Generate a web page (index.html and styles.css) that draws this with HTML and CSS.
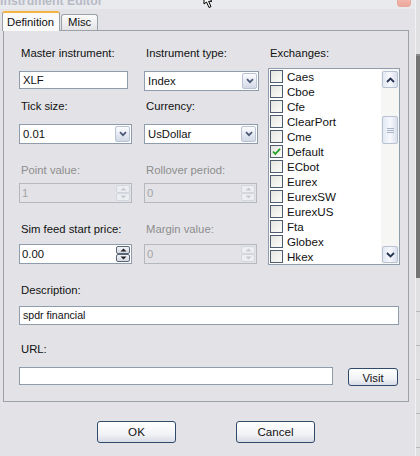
FILE: index.html
```html
<!DOCTYPE html>
<html>
<head>
<meta charset="utf-8">
<link rel="stylesheet" href="styles.css">
</head>
<body>
<div class="screen">
  <div class="dialog">
    <div class="titlebar">
      <span class="title">Instrument Editor</span>
      <span class="close"></span>
    </div>
    <div class="tabs">
      <div class="tab active">Definition</div>
      <div class="tab">Misc</div>
    </div>
    <div class="panel">
      <div class="top">
        <div class="grid">
          <div class="field">
            <div class="lbl g10">Master instrument:</div>
            <div class="input w109"><span>XLF</span></div>
          </div>
          <div class="field">
            <div class="lbl g10">Instrument type:</div>
            <div class="select w115"><span class="val">Index</span><span class="dd"><svg width="8" height="6" viewBox="0 0 8 6"><path d="M1 1.2 L4 4.2 L7 1.2" fill="none" stroke="#4a5a78" stroke-width="1.7"/></svg></span></div>
          </div>
          <div class="field r2">
            <div class="lbl g10">Tick size:</div>
            <div class="select w113"><span class="val">0.01</span><span class="dd"><svg width="8" height="6" viewBox="0 0 8 6"><path d="M1 1.2 L4 4.2 L7 1.2" fill="none" stroke="#4a5a78" stroke-width="1.7"/></svg></span></div>
          </div>
          <div class="field r2">
            <div class="lbl g10">Currency:</div>
            <div class="select w114"><span class="val">UsDollar</span><span class="dd"><svg width="8" height="6" viewBox="0 0 8 6"><path d="M1 1.2 L4 4.2 L7 1.2" fill="none" stroke="#4a5a78" stroke-width="1.7"/></svg></span></div>
          </div>
          <div class="field r3">
            <div class="lbl dis g5">Point value:</div>
            <div class="spin disabled w113"><span class="val">1</span><span class="arrows"><span class="ar"><svg width="7" height="4" viewBox="0 0 7 4"><path d="M0.5 3.5 L3.5 0.5 L6.5 3.5 Z" fill="#c6c9cf"/></svg></span><span class="ar"><svg width="7" height="4" viewBox="0 0 7 4"><path d="M0.5 0.5 L3.5 3.5 L6.5 0.5 Z" fill="#c6c9cf"/></svg></span></span></div>
          </div>
          <div class="field r3">
            <div class="lbl dis g5">Rollover period:</div>
            <div class="spin disabled w113"><span class="val">0</span><span class="arrows"><span class="ar"><svg width="7" height="4" viewBox="0 0 7 4"><path d="M0.5 3.5 L3.5 0.5 L6.5 3.5 Z" fill="#c6c9cf"/></svg></span><span class="ar"><svg width="7" height="4" viewBox="0 0 7 4"><path d="M0.5 0.5 L3.5 3.5 L6.5 0.5 Z" fill="#c6c9cf"/></svg></span></span></div>
          </div>
          <div class="field r4">
            <div class="lbl g7">Sim feed start price:</div>
            <div class="spin w113"><span class="val">0.00</span><span class="arrows on"><span class="ar"><svg width="7" height="4" viewBox="0 0 7 4"><path d="M0.5 3.5 L3.5 0.5 L6.5 3.5 Z" fill="#222"/></svg></span><span class="ar"><svg width="7" height="4" viewBox="0 0 7 4"><path d="M0.5 0.5 L3.5 3.5 L6.5 0.5 Z" fill="#222"/></svg></span></span></div>
          </div>
          <div class="field r4">
            <div class="lbl dis g7">Margin value:</div>
            <div class="spin disabled w113"><span class="val">0</span><span class="arrows"><span class="ar"><svg width="7" height="4" viewBox="0 0 7 4"><path d="M0.5 3.5 L3.5 0.5 L6.5 3.5 Z" fill="#c6c9cf"/></svg></span><span class="ar"><svg width="7" height="4" viewBox="0 0 7 4"><path d="M0.5 0.5 L3.5 3.5 L6.5 0.5 Z" fill="#c6c9cf"/></svg></span></span></div>
          </div>
        </div>
        <div class="exch">
          <div class="lbl exlbl">Exchanges:</div>
          <div class="list">
            <div class="items">
              <div class="item"><span class="cb"></span>Caes</div>
              <div class="item"><span class="cb"></span>Cboe</div>
              <div class="item"><span class="cb"></span>Cfe</div>
              <div class="item"><span class="cb"></span>ClearPort</div>
              <div class="item"><span class="cb"></span>Cme</div>
              <div class="item"><span class="cb"><svg width="11" height="11" viewBox="0 0 11 11"><path d="M2 5.5 L4.3 8 L9 2.8" fill="none" stroke="#22a022" stroke-width="1.8"/></svg></span>Default</div>
              <div class="item"><span class="cb"></span>ECbot</div>
              <div class="item"><span class="cb"></span>Eurex</div>
              <div class="item"><span class="cb"></span>EurexSW</div>
              <div class="item"><span class="cb"></span>EurexUS</div>
              <div class="item"><span class="cb"></span>Fta</div>
              <div class="item"><span class="cb"></span>Globex</div>
              <div class="item"><span class="cb"></span>Hkex</div>
            </div>
            <div class="sbar">
              <span class="sbtn"><svg width="9" height="6" viewBox="0 0 9 6"><path d="M1 5 L4.5 1.5 L8 5" fill="none" stroke="#26344f" stroke-width="1.8"/></svg></span>
              <span class="thumb"><svg width="7" height="7" viewBox="0 0 7 7"><path d="M0 1.5 H7 M0 3.5 H7 M0 5.5 H7" stroke="#a8b2c6" stroke-width="1"/></svg></span>
              <span class="sbtn down"><svg width="9" height="6" viewBox="0 0 9 6"><path d="M1 1 L4.5 4.5 L8 1" fill="none" stroke="#26344f" stroke-width="1.8"/></svg></span>
            </div>
          </div>
        </div>
      </div>
      <div class="lbl desc-lbl">Description:</div>
      <div class="input wdesc"><span class="small">spdr financial</span></div>
      <div class="lbl url-lbl">URL:</div>
      <div class="url-row">
        <div class="input wurl"></div>
        <div class="btn visit">Visit</div>
      </div>
    </div>
    <div class="buttons">
      <div class="btn big">OK</div>
      <div class="btn big">Cancel</div>
    </div>
  </div>
  <div class="behind">
    <div class="bh-top"></div>
    <div class="bh-dark"></div>
    <div class="bh-low"></div>
    <div class="bh-low"></div>
    <div class="bh-low"></div>
    <div class="bh-low"></div>
    <div class="bh-low"></div>
  </div>
  <svg class="cursor" width="14" height="14" viewBox="0 0 14 14"><path d="M1 -6 L1 4 L3.5 2 L6 7.5 L8 6.6 L5.6 1.3 L9 1.3 Z" fill="#fff" stroke="#000" stroke-width="1"/></svg>
</div>
</body>
</html>
```
FILE: styles.css
```css
* { box-sizing: border-box; }
html, body { margin: 0; padding: 0; }
body {
  width: 420px;
  height: 456px;
  overflow: hidden;
  background: #e3e3e7;
  font-family: "Liberation Sans", Arial, sans-serif;
  font-size: 11.3px;
  color: #111;
}
.screen {
  position: relative;
  display: flex;
  width: 420px;
  height: 456px;
}
.dialog {
  width: 416px;
  height: 456px;
  background: #e3e3e7;
  border-right: 1px solid #f2f2f4;
}
.titlebar {
  height: 9px;
  overflow: hidden;
  display: flex;
  justify-content: space-between;
  background: #e9eaee;
}
.title {
  display: block;
  margin-top: -6px;
  margin-left: 0;
  font-weight: bold;
  font-size: 12.3px;
  line-height: 14px;
  color: #b7bbc6;
}
.close {
  display: block;
  width: 14px;
  height: 16px;
  margin-top: -9px;
  margin-right: 4px;
  border: 1px solid #e7a89e;
  border-radius: 3px;
  background: linear-gradient(#f7c8c0, #eea89c);
}
.tabs {
  display: flex;
  align-items: flex-end;
  height: 22px;
  padding-left: 2px;
  margin-top: -1px;
}
.tab {
  height: 16px;
  padding: 0 6px;
  border: 1px solid #9aa2a8;
  border-bottom: none;
  border-radius: 3px 3px 0 0;
  background: linear-gradient(#fbfbfb, #e4e4e6);
  line-height: 15px;
  margin-bottom: 0;
  margin-left: 1px;
}
.tab.active {
  height: 20px;
  width: 58px;
  padding: 2px 0 0 4px;
  margin-left: 0;
  margin-bottom: -1px;
  border-top: 2px solid #f3b53f;
  background: #fafafb;
  position: relative;
  z-index: 1;
  line-height: 15px;
}
.panel {
  margin-left: 3px;
  width: 406px;
  height: 372px;
  border: 1px solid #9ba1a6;
  background: #e3e3e7;
  padding: 14px 0 0 15px;
}
.top {
  display: flex;
  height: 220px;
}
.grid {
  display: grid;
  grid-template-columns: 113px 115px;
  column-gap: 12px;
  align-content: start;
  align-items: start;
}
.field { display: flex; flex-direction: column; }
.r2 { margin-top: 7px; }
.r3 { margin-top: 18px; }
.r4 { margin-top: 18px; }
.lbl {
  height: 16px;
  line-height: 16px;
  padding-left: 2px;
  white-space: nowrap;
}
.lbl.dis { color: #8d8d8d; }
.g10 { margin-bottom: 10px; }
.g7 { margin-bottom: 7px; }
.g5 { margin-bottom: 5px; }
.input {
  height: 18px;
  border: 1px solid #8f9cab;
  background: #fff;
  padding-left: 3px;
  line-height: 16px;
  white-space: nowrap;
}
.w109 { width: 109px; }
.w113 { width: 113px; }
.w114 { width: 114px; }
.w115 { width: 115px; }
.select {
  height: 20px;
  border: 1px solid #8f9cab;
  background: #fff;
  display: flex;
  justify-content: space-between;
  padding: 1px;
}
.select .val { padding-left: 2px; line-height: 17px; }
.dd {
  width: 15px;
  height: 16px;
  border: 1px solid #b9c3d4;
  border-radius: 2px;
  background: linear-gradient(#fbfcfe, #d2d9e6);
  display: flex;
  align-items: center;
  justify-content: center;
}
.spin {
  height: 20px;
  border: 1px solid #8f9cab;
  background: #fff;
  display: flex;
  justify-content: space-between;
  padding: 1px 1px 1px 1px;
}
.spin .val { padding-left: 1px; line-height: 17px; }
.spin.disabled {
  background: #e3e3e7;
  border-color: #b5b8bd;
  color: #a4a4a4;
}
.arrows {
  width: 14px;
  display: flex;
  flex-direction: column;
  gap: 0;
}
.ar {
  flex: 1;
  display: flex;
  align-items: center;
  justify-content: center;
  border: 1px solid #d3d6dc;
  border-radius: 2px;
  background: #eceef1;
}
.arrows.on .ar {
  border-color: #5b6677;
  background: linear-gradient(#f4f5f8, #d4d8e0);
}
.exch {
  margin-left: 9px;
  width: 132px;
}
.exlbl { margin-bottom: 7px; }
.list {
  height: 197px;
  border: 1px solid #8f9cab;
  background: #fff;
  display: flex;
}
.items { flex: 1; }
.item {
  height: 15px;
  display: flex;
  align-items: center;
  padding-left: 1px;
  white-space: nowrap;
  font-size: 11.6px;
}
.cb {
  width: 13px;
  height: 13px;
  border: 1px solid #4d5d6e;
  background: linear-gradient(135deg, #e6e6e0, #fbfbfa);
  margin-right: 4px;
  display: flex;
  align-items: center;
  justify-content: center;
}
.sbar {
  width: 18px;
  background: #f6f6f4;
  display: flex;
  flex-direction: column;
  align-items: center;
  padding-top: 2px;
}
.sbtn {
  width: 16px;
  height: 17px;
  border: 1px solid #b8c2d2;
  border-radius: 2px;
  background: linear-gradient(90deg, #e2e8f3, #f6f8fc 50%, #d9e0ec);
  display: flex;
  align-items: center;
  justify-content: center;
}
.thumb {
  margin-top: 28px;
  width: 16px;
  height: 28px;
  border: 1px solid #b8c2d2;
  border-radius: 2px;
  background: linear-gradient(90deg, #e2e8f3, #f6f8fc 50%, #d9e0ec);
  display: flex;
  align-items: center;
  justify-content: center;
}
.sbtn.down { margin-top: auto; margin-bottom: 1px; }
.desc-lbl { margin-top: 17px; margin-bottom: 8px; }
.wdesc { width: 380px; height: 19px; }
.small { font-size: 10.6px; }
.url-lbl { margin-top: 16px; margin-bottom: 10px; }
.url-row { display: flex; align-items: flex-start; }
.wurl { width: 314px; }
.btn {
  border: 1px solid #2f4a6b;
  border-radius: 3px;
  background: linear-gradient(#ffffff, #f2f3f6 60%, #d8dce6);
  display: flex;
  align-items: center;
  justify-content: center;
  line-height: 14px;
}
.visit {
  width: 50px;
  height: 18px;
  margin-left: 15px;
  margin-top: 1px;
  padding-top: 1px;
}
.buttons {
  display: flex;
  gap: 60px;
  padding-left: 97px;
  margin-top: 19px;
}
.big { width: 79px; height: 22px; font-size: 11.6px; }
.behind {
  width: 4px;
  height: 456px;
  display: flex;
  flex-direction: column;
  background: #e0e0e2;
}
.bh-top { height: 56px; border-bottom: 2px solid #8a8a8a; margin-top: 0; }
.bh-dark { height: 222px; background: #747474; }
.bh-low { height: 34px; border-bottom: 1px solid #b8b8bc; }
.cursor {
  position: absolute;
  left: 203px;
  top: 0;
}
```
